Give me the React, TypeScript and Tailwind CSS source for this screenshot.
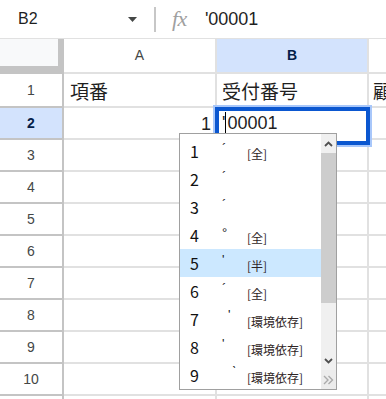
import React from "react";

type Cand = { n: number; g: string; gx: number; gy: number; a?: string };

const cands: Cand[] = [
  { n: 1, g: "´", gx: 0, gy: -3, a: "[全]" },
  { n: 2, g: "´", gx: 0, gy: -3 },
  { n: 3, g: "´", gx: 0, gy: -3 },
  { n: 4, g: "°", gx: 0, gy: -3, a: "[全]" },
  { n: 5, g: "'", gx: 0, gy: -4, a: "[半]" },
  { n: 6, g: "´", gx: 0, gy: -3, a: "[全]" },
  { n: 7, g: "'", gx: 6, gy: -5, a: "[環境依存]" },
  { n: 8, g: "'", gx: 0, gy: -4, a: "[環境依存]" },
  { n: 9, g: "ˋ", gx: 10, gy: -4, a: "[環境依存]" },
];

const rowNums = [1, 2, 3, 4, 5, 6, 7, 8, 9, 10, 11];

export default function App() {
  return (
    <div className="relative w-[386px] h-[399px] overflow-hidden bg-white font-['Liberation_Sans','Noto_Sans_CJK_JP',sans-serif] text-[#1f1f1f]">
      {/* formula bar */}
      <div className="flex items-center h-[39px] border-b border-[#e1e1e1]">
        <div className="w-[146px] flex items-center justify-between pl-[18px] pr-[9px]">
          <span className="text-[16px] text-[#1f1f1f]">B2</span>
          <svg width="9" height="5" viewBox="0 0 9 5">
            <path d="M0 0 L9 0 L4.5 5 Z" fill="#444746" />
          </svg>
        </div>
        <div className="ml-[8px] w-[2px] h-[25px] bg-[#c7c7c7]" />
        <span className="ml-[16px] text-[22px] italic font-['Liberation_Serif',serif] text-[#a0a0a0] leading-none tracking-[-0.5px]">
          fx
        </span>
        <span className="ml-[18px] text-[18px] text-[#1f1f1f]">'00001</span>
      </div>

      {/* column headers */}
      <div className="flex h-[35px]">
        <div className="w-[64px] h-[35px] bg-[#f8f9fa] border-r-[6px] border-b-[8px] border-[#c4c4c4]" />
        <div className="w-[153px] flex items-center justify-center border-r-2 border-b-2 border-[#e1e1e1] text-[14px] text-[#444746]">
          A
        </div>
        <div className="w-[152px] flex items-center justify-center bg-[#d3e3fd] border-r-2 border-b-2 border-[#e1e1e1] text-[14px] font-bold text-[#041e49]">
          B
        </div>
        <div className="flex-1 border-b-2 border-[#e1e1e1]" />
      </div>

      {/* rows */}
      {rowNums.map((r) => {
        const h = r === 1 ? "h-[34px]" : "h-[32px]";
        const sel = r === 2;
        return (
          <div key={r} className={`flex ${h}`}>
            <div
              className={`w-[64px] flex items-center justify-center border-r-2 border-b-2 border-[#c4c4c4] text-[14px] ${
                sel ? "bg-[#d3e3fd] font-bold text-[#041e49]" : "text-[#444746]"
              }`}
            >
              {r <= 10 ? r : ""}
            </div>
            <div className="w-[153px] flex items-end border-r-2 border-b-2 border-[#e1e1e1] text-[19px] leading-[23px] pb-[2px]">
              {r === 1 && <span className="pl-[6px]">項番</span>}
              {r === 2 && <span className="ml-auto pr-[4px] text-[18px]">1</span>}
            </div>
            <div className="w-[152px] flex items-end border-r-2 border-b-2 border-[#e1e1e1] text-[19px] leading-[23px] pb-[2px]">
              {r === 1 && <span className="pl-[5px]">受付番号</span>}
            </div>
            <div className="flex-1 flex items-end border-b-2 border-[#e1e1e1] text-[19px] leading-[23px] pb-[2px] overflow-hidden whitespace-nowrap">
              {r === 1 && <span className="pl-[4px]">顧客</span>}
            </div>
          </div>
        );
      })}

      {/* cell editor */}
      <div className="absolute left-[215px] top-[107px] w-[155px] h-[38px] bg-white border-[4px] border-[#0b57d0] shadow-[0_0_0_2px_#a8c7fa]">
        <div className="flex items-center pl-[3px] pt-[1px] text-[18px] leading-[22px]">
          <span>'</span>
          <span className="inline-block w-[1px] h-[22px] bg-black" />
          <span className="ml-[1px]">00001</span>
        </div>
      </div>

      {/* IME candidate window */}
      <div className="absolute left-[179px] top-[133px] w-[158px] h-[257px] bg-white border border-[#a0a0a0] flex overflow-hidden font-['Noto_Sans_CJK_JP','Noto_Sans',sans-serif]">
        <div className="flex-1 pt-[3px]">
          {cands.map((c) => (
            <div
              key={c.n}
              className={`relative h-[28px] flex items-center ${c.n === 5 ? "bg-[#cce8ff]" : ""}`}
            >
              <span className="w-[42px] pl-[10px] text-[16px] leading-none text-[#111]">{c.n}</span>
              <span className="relative w-[25px] text-[13px] leading-none text-[#222] font-['Liberation_Sans',sans-serif]">
                <span className="relative" style={{ left: c.gx, top: c.gy }}>
                  {c.g}
                </span>
              </span>
              {c.a && (
                <span className="mt-[6px] text-[12px] leading-none text-[#2e2424]">{c.a}</span>
              )}
            </div>
          ))}
        </div>
        <div className="w-[15px] flex flex-col bg-[#f0f0f0]">
          <div className="h-[19px] flex items-center justify-center">
            <svg width="9" height="6" viewBox="0 0 9 6">
              <path d="M1 5 L4.5 1.5 L8 5" fill="none" stroke="#505050" strokeWidth="1.8" />
            </svg>
          </div>
          <div className="h-[150px] bg-[#cdcdcd]" />
          <div className="flex-1" />
          <div className="h-[18px] flex items-center justify-center">
            <svg width="9" height="6" viewBox="0 0 9 6">
              <path d="M1 1 L4.5 4.5 L8 1" fill="none" stroke="#505050" strokeWidth="1.8" />
            </svg>
          </div>
          <div className="h-[19px] flex items-center justify-center bg-[#ececec]">
            <svg width="11" height="10" viewBox="0 0 11 10">
              <path d="M1 1 L5 5 L1 9 M5.5 1 L9.5 5 L5.5 9" fill="none" stroke="#aaaaaa" strokeWidth="1.4" />
            </svg>
          </div>
        </div>
      </div>
    </div>
  );
}
